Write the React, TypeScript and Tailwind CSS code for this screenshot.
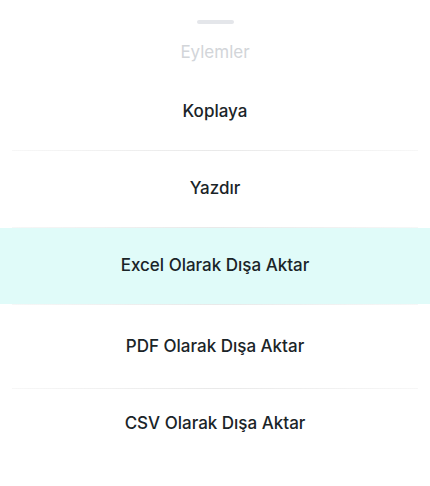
import React from "react";

const actions = [
  { label: "Koplaya", h: "h-[77px]" },
  { label: "Yazdır", h: "h-[76px]" },
  { label: "Excel Olarak Dışa Aktar", h: "h-[76px]", active: true },
  { label: "PDF Olarak Dışa Aktar", h: "h-[83px]" },
  { label: "CSV Olarak Dışa Aktar", h: "h-[70px]", last: true },
];

export default function App() {
  return (
    <div className="w-[430px] h-[486px] bg-white overflow-hidden font-['Inter','Noto_Sans',sans-serif]">
      {/* handle */}
      <div className="flex justify-center pt-[20px]">
        <div className="w-[37px] h-[4px] rounded-full bg-[#e4e6ea]" />
      </div>
      {/* title */}
      <div className="text-center text-[17px] leading-[24px] mt-[16px] text-[#d2d5d9]">
        Eylemler
      </div>
      {/* list */}
      <div className="flex flex-col mt-[9px]">
        {actions.map((a) => (
          <div key={a.label} className="flex flex-col">
            <div
              className={`flex items-center justify-center ${a.h} text-[17px] font-[450] text-[#1a2428] ${
                a.active ? "bg-[#e0fbf9]" : ""
              }`}
            >
              {a.label}
            </div>
            {!a.last && (
              <div className="mx-[12px] h-px bg-gradient-to-r from-[#f7f7f7] via-[#e9e9e9] to-[#f7f7f7]" />
            )}
          </div>
        ))}
      </div>
    </div>
  );
}
